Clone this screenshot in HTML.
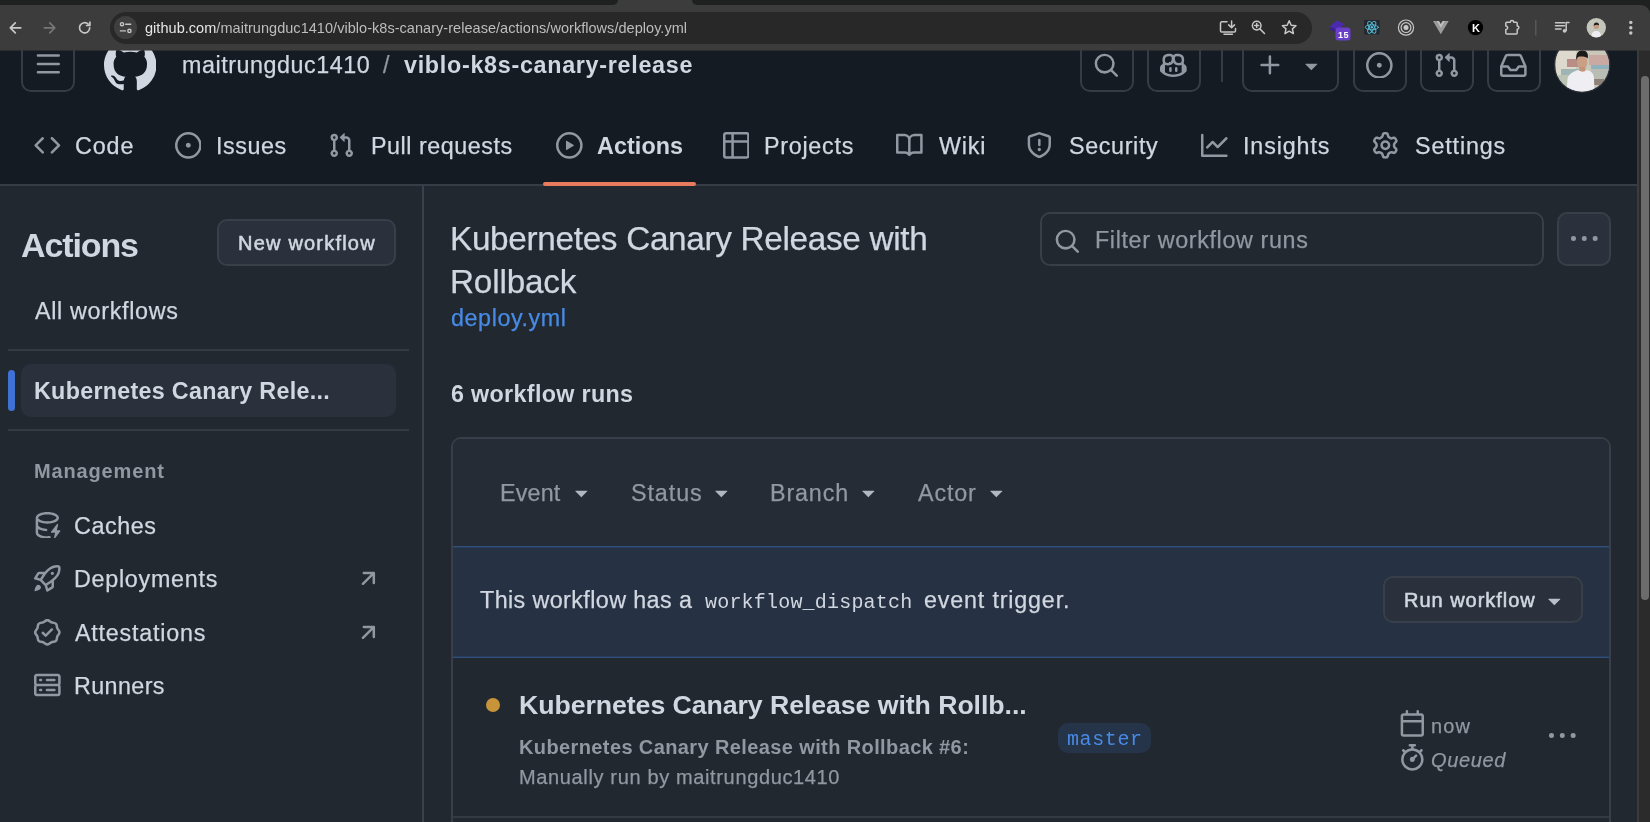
<!DOCTYPE html>
<html lang="en"><head><meta charset="utf-8"><title>Workflow runs · maitrungduc1410/viblo-k8s-canary-release</title>
<style>
html,body{margin:0;padding:0;}
body{width:1650px;height:822px;overflow:hidden;position:relative;background:#212830;font-family:'Liberation Sans', sans-serif;}
.a{position:absolute;display:block;}
.t{position:absolute;white-space:nowrap;line-height:1;will-change:transform;}
.btn{position:absolute;box-sizing:border-box;border:2px solid #383f48;border-radius:10px;}
</style></head><body>
<div class="a" style="left:0px;top:50px;width:1650px;height:135px;background:#151b23;"></div><div class="a" style="left:0px;top:184px;width:1650px;height:2px;background:#363d46;"></div><div class="btn" style="left:21px;top:38px;width:54px;height:54px;border-color:#363c45;"></div><svg class="a" style="left:34.80px;top:51.30px;" width="26.67" height="26.67" viewBox="0 0 16 16" fill="#9198a1"><path d="M1 2.75A.75.75 0 0 1 1.75 2h12.5a.75.75 0 0 1 0 1.5H1.75A.75.75 0 0 1 1 2.75Zm0 5A.75.75 0 0 1 1.75 7h12.5a.75.75 0 0 1 0 1.5H1.75A.75.75 0 0 1 1 7.75ZM1.75 12h12.5a.75.75 0 0 1 0 1.5H1.75a.75.75 0 0 1 0-1.5Z"/></svg><svg class="a" style="left:103.50px;top:38.50px;" width="52.50" height="52.50" viewBox="0 0 16 16" fill="#d1d7e0"><path d="M8 0c4.42 0 8 3.58 8 8a8.013 8.013 0 0 1-5.45 7.59c-.4.08-.55-.17-.55-.38 0-.27.01-1.13.01-2.2 0-.75-.25-1.23-.54-1.48 1.78-.2 3.65-.88 3.65-3.95 0-.88-.31-1.59-.82-2.15.08-.2.36-1.02-.08-2.12 0 0-.67-.22-2.2.82-.64-.18-1.32-.27-2-.27-.68 0-1.36.09-2 .27-1.53-1.03-2.2-.82-2.2-.82-.44 1.1-.16 1.92-.08 2.12-.51.56-.82 1.28-.82 2.15 0 3.06 1.86 3.75 3.64 3.95-.23.2-.44.55-.51 1.07-.46.21-1.61.55-2.33-.66-.15-.24-.6-.83-1.23-.82-.67.01-.27.38.01.53.34.19.73.9.82 1.13.16.45.68 1.31 2.69.94 0 .67.01 1.3.01 1.49 0 .21-.15.45-.55.38A7.995 7.995 0 0 1 0 8c0-4.42 3.58-8 8-8Z"/></svg><div class="btn" style="left:1080px;top:38px;width:54px;height:54px;border-color:#363c45;"></div><svg class="a" style="left:1093.20px;top:51.60px;" width="26.67" height="26.67" viewBox="0 0 16 16" fill="#9198a1"><path d="M10.68 11.74a6 6 0 0 1-7.922-8.982 6 6 0 0 1 8.982 7.922l3.04 3.04a.749.749 0 0 1-.326 1.275.749.749 0 0 1-.734-.215ZM11.5 7a4.499 4.499 0 1 0-8.997 0A4.499 4.499 0 0 0 11.5 7Z"/></svg><div class="btn" style="left:1147px;top:38px;width:54px;height:54px;border-color:#363c45;"></div><svg class="a" style="left:1160.30px;top:51.60px;" width="26.67" height="26.67" viewBox="0 0 16 16" fill="#9198a1"><path d="M7.998 15.035c-4.562 0-7.873-2.914-7.998-3.749V9.338c.085-.628.677-1.686 1.588-2.065.013-.07.024-.143.036-.218.029-.183.06-.384.126-.612-.201-.508-.254-1.084-.254-1.656 0-.87.128-1.769.693-2.484.579-.733 1.494-1.124 2.724-1.261 1.206-.134 2.262.034 2.944.765.05.053.096.108.139.165.044-.057.094-.112.143-.165.682-.731 1.738-.899 2.944-.765 1.23.137 2.145.528 2.724 1.261.566.715.693 1.614.693 2.484 0 .572-.053 1.148-.254 1.656.066.228.098.429.126.612.012.076.024.148.037.218.924.385 1.522 1.471 1.591 2.095v1.872c0 .766-3.351 3.795-8.002 3.795Zm0-1.485c2.28 0 4.584-1.11 5.002-1.433V7.862l-.023-.116c-.49.21-1.075.291-1.727.291-1.146 0-2.059-.327-2.71-.991A3.222 3.222 0 0 1 8 6.303a3.24 3.24 0 0 1-.544.743c-.65.664-1.563.991-2.71.991-.652 0-1.236-.081-1.727-.291l-.023.116v4.255c.419.323 2.722 1.433 5.002 1.433ZM6.762 2.83c-.193-.206-.637-.413-1.682-.297-1.019.113-1.479.404-1.713.7-.247.312-.369.789-.369 1.554 0 .793.129 1.171.308 1.371.162.181.519.379 1.442.379.853 0 1.339-.235 1.638-.54.315-.322.527-.827.617-1.553.117-.935-.037-1.395-.241-1.614Zm4.155-.297c-1.044-.116-1.488.091-1.681.297-.204.219-.359.679-.242 1.614.091.726.303 1.231.618 1.553.299.305.784.54 1.638.54.922 0 1.28-.198 1.442-.379.179-.2.308-.578.308-1.371 0-.765-.123-1.242-.37-1.554-.233-.296-.693-.587-1.713-.7ZM6.25 9.037a.75.75 0 0 1 .75.75v1.501a.75.75 0 0 1-1.5 0V9.787a.75.75 0 0 1 .75-.75Zm4.25.75v1.501a.75.75 0 0 1-1.5 0V9.787a.75.75 0 0 1 1.5 0Z"/></svg><div class="btn" style="left:1353px;top:38px;width:54px;height:54px;border-color:#363c45;"></div><svg class="a" style="left:1366.20px;top:51.60px;" width="26.67" height="26.67" viewBox="0 0 16 16" fill="#9198a1"><path d="M8 9.500a1.500 1.500 0 1 0 0-3 1.500 1.500 0 0 0 0 3ZM8 0a8 8 0 1 1 0 16A8 8 0 0 1 8 0ZM1.500 8a6.500 6.500 0 1 0 13 0 6.500 6.500 0 0 0-13 0Z"/></svg><div class="btn" style="left:1420px;top:38px;width:54px;height:54px;border-color:#363c45;"></div><svg class="a" style="left:1433.30px;top:51.60px;" width="26.67" height="26.67" viewBox="0 0 16 16" fill="#9198a1"><path d="M1.500 3.250a2.250 2.250 0 1 1 3 2.122v5.256a2.251 2.251 0 1 1-1.500 0V5.372A2.250 2.250 0 0 1 1.500 3.250Zm5.677-.177L9.573.677A.25.25 0 0 1 10 .854V2.500h1A2.500 2.500 0 0 1 13.500 5v5.628a2.251 2.251 0 1 1-1.500 0V5a1 1 0 0 0-1-1h-1v1.646a.25.25 0 0 1-.427.177L7.177 3.427a.25.25 0 0 1 0-.354ZM3.750 2.500a.75.75 0 1 0 0 1.500.75.75 0 0 0 0-1.500Zm0 9.500a.75.75 0 1 0 0 1.500.75.75 0 0 0 0-1.500Zm8.250.750a.75.75 0 1 0 1.500 0 .75.75 0 0 0-1.500 0Z"/></svg><div class="btn" style="left:1487px;top:38px;width:54px;height:54px;border-color:#363c45;"></div><svg class="a" style="left:1500.30px;top:51.60px;" width="26.67" height="26.67" viewBox="0 0 16 16" fill="#9198a1"><path d="M2.800 2.060A1.750 1.750 0 0 1 4.410 1h7.180c.7 0 1.333.417 1.610 1.060l2.740 6.395c.04.093.06.194.06.295v4.500A1.750 1.750 0 0 1 14.250 15H1.750A1.750 1.750 0 0 1 0 13.250v-4.500c0-.101.02-.202.06-.295Zm1.610.440a.25.25 0 0 0-.23.152L1.887 8H4.750a.75.75 0 0 1 .6.300L6.625 10h2.750l1.275-1.700a.75.75 0 0 1 .6-.300h2.863L11.820 2.652a.25.25 0 0 0-.23-.152Zm10.090 7h-2.875l-1.275 1.700a.75.75 0 0 1-.6.300h-3.500a.75.75 0 0 1-.6-.300L4.375 9.500H1.500v3.750c0 .138.112.25.25.25h12.500a.25.25 0 0 0 .25-.25Z"/></svg><div class="a" style="left:1221px;top:50px;width:2px;height:32px;background:#363c45;"></div><div class="btn" style="left:1242px;top:38px;width:97px;height:54px;border-color:#363c45;"></div><svg class="a" style="left:1257.00px;top:51.60px;" width="26.67" height="26.67" viewBox="0 0 16 16" fill="#9198a1"><path d="M7.75 2a.75.75 0 0 1 .75.75V7h4.25a.75.75 0 0 1 0 1.5H8.5v4.25a.75.75 0 0 1-1.5 0V8.500H2.75a.75.75 0 0 1 0-1.500H7V2.750A.75.75 0 0 1 7.750 2Z"/></svg><svg class="a" style="left:1297.60px;top:51.60px;" width="26.67" height="26.67" viewBox="0 0 16 16" fill="#9198a1"><path d="m4.427 7.427 3.396 3.396a.25.25 0 0 0 .354 0l3.396-3.396A.25.25 0 0 0 11.396 7H4.604a.25.25 0 0 0-.177.427Z"/></svg><svg class="a" style="left:1553px;top:35px" width="59" height="59" viewBox="0 0 59 59"><defs><clipPath id="av1"><circle cx="29.1" cy="29.7" r="26.9"/></clipPath></defs><circle cx="29.1" cy="29.7" r="28.3" fill="#2d343d"/><g clip-path="url(#av1)"><rect x="0" y="0" width="59" height="59" fill="#c9c6ba"/><rect x="3" y="16" width="20" height="26" fill="#ddd9cd"/><rect x="14" y="24" width="12" height="8" fill="#b98e86"/><rect x="8" y="34" width="18" height="8" fill="#9fb5b5"/><rect x="36" y="20" width="22" height="10" fill="#c9a9a2"/><rect x="38" y="30" width="20" height="4" fill="#8fb0bd"/><rect x="38" y="34" width="20" height="12" fill="#b9bdb3"/><rect x="40" y="44" width="16" height="6" fill="#8d8178"/><rect x="4" y="40" width="14" height="14" fill="#bcc4b4"/><ellipse cx="29.2" cy="27" rx="5.2" ry="7" fill="#c99f85"/><rect x="26.3" y="32" width="6" height="6" fill="#c29478"/><path d="M23.3 25 C22.6 18 25.5 15.3 29.5 15.5 C33.8 15.5 35.6 18.5 34.8 23.5 C33 21.5 28 21 25 22 Z" fill="#1b1a1a"/><path d="M13.5 59 L14.5 44 C15.5 38.5 21 36.2 25.3 35 C28 37.2 31.5 37.2 33.6 35 C38 36.2 40.6 38 41 43 L41.5 59 Z" fill="#efeff3"/></g></svg><svg class="a" style="left:34.20px;top:132.00px;" width="26.67" height="26.67" viewBox="0 0 16 16" fill="#9198a1"><path d="m11.280 3.220 4.250 4.250a.75.75 0 0 1 0 1.060l-4.250 4.250a.749.749 0 0 1-1.275-.326.749.749 0 0 1 .215-.734L13.940 8l-3.720-3.720a.749.749 0 0 1 .326-1.275.749.749 0 0 1 .734.215Zm-6.560 0a.751.751 0 0 1 1.042.018.751.751 0 0 1 .018 1.042L2.060 8l3.720 3.720a.749.749 0 0 1-.326 1.275.749.749 0 0 1-.734-.215L.470 8.530a.75.75 0 0 1 0-1.060Z"/></svg><svg class="a" style="left:174.60px;top:132.00px;" width="26.67" height="26.67" viewBox="0 0 16 16" fill="#9198a1"><path d="M8 9.500a1.500 1.500 0 1 0 0-3 1.500 1.500 0 0 0 0 3ZM8 0a8 8 0 1 1 0 16A8 8 0 0 1 8 0ZM1.500 8a6.500 6.500 0 1 0 13 0 6.500 6.500 0 0 0-13 0Z"/></svg><svg class="a" style="left:327.60px;top:132.00px;" width="26.67" height="26.67" viewBox="0 0 16 16" fill="#9198a1"><path d="M1.500 3.250a2.250 2.250 0 1 1 3 2.122v5.256a2.251 2.251 0 1 1-1.500 0V5.372A2.250 2.250 0 0 1 1.500 3.250Zm5.677-.177L9.573.677A.25.25 0 0 1 10 .854V2.500h1A2.500 2.500 0 0 1 13.500 5v5.628a2.251 2.251 0 1 1-1.500 0V5a1 1 0 0 0-1-1h-1v1.646a.25.25 0 0 1-.427.177L7.177 3.427a.25.25 0 0 1 0-.354ZM3.750 2.500a.75.75 0 1 0 0 1.500.75.75 0 0 0 0-1.500Zm0 9.500a.75.75 0 1 0 0 1.500.75.75 0 0 0 0-1.500Zm8.250.750a.75.75 0 1 0 1.500 0 .75.75 0 0 0-1.500 0Z"/></svg><svg class="a" style="left:556.30px;top:132.00px;" width="26.67" height="26.67" viewBox="0 0 16 16" fill="#9198a1"><path d="M8 0a8 8 0 1 1 0 16A8 8 0 0 1 8 0ZM1.500 8a6.500 6.500 0 1 0 13 0 6.500 6.500 0 0 0-13 0Zm4.879-2.773 4.264 2.559a.25.25 0 0 1 0 .428l-4.264 2.559A.25.25 0 0 1 6 10.559V5.442a.25.25 0 0 1 .379-.215Z"/></svg><svg class="a" style="left:722.50px;top:132.00px;" width="26.67" height="26.67" viewBox="0 0 16 16" fill="#9198a1"><path d="M0 1.750C0 .784.784 0 1.750 0h12.500C15.216 0 16 .784 16 1.750v12.500A1.750 1.750 0 0 1 14.250 16H1.750A1.750 1.750 0 0 1 0 14.250ZM6.500 6.500v8h7.750a.25.25 0 0 0 .25-.25V6.500Zm8-1.500V1.750a.25.25 0 0 0-.25-.25H6.500V5Zm-13 1.500v7.750c0 .138.112.25.25.25H5v-8ZM5 5V1.500H1.750a.25.25 0 0 0-.25.25V5Z"/></svg><svg class="a" style="left:896.30px;top:132.00px;" width="26.67" height="26.67" viewBox="0 0 16 16" fill="#9198a1"><path d="M0 1.750A.75.75 0 0 1 .750 1h4.253c1.227 0 2.317.590 3 1.501A3.743 3.743 0 0 1 11.006 1h4.245a.75.75 0 0 1 .75.750v10.500a.75.75 0 0 1-.75.750h-4.507a2.250 2.250 0 0 0-1.591.659l-.622.621a.75.75 0 0 1-1.060 0l-.622-.621A2.250 2.250 0 0 0 5.258 13H.750a.75.75 0 0 1-.750-.750Zm7.251 10.324.004-5.073-.002-2.253A2.250 2.250 0 0 0 5.003 2.500H1.500v9h3.757a3.750 3.750 0 0 1 1.994.574ZM8.755 4.750l-.004 7.322a3.752 3.752 0 0 1 1.992-.572H14.500v-9h-3.495a2.250 2.250 0 0 0-2.250 2.250Z"/></svg><svg class="a" style="left:1026.40px;top:132.00px;" width="26.67" height="26.67" viewBox="0 0 16 16" fill="#9198a1"><path d="M7.467.133a1.748 1.748 0 0 1 1.066 0l5.250 1.680A1.750 1.750 0 0 1 15 3.480V7c0 1.566-.32 3.182-1.303 4.682-.983 1.498-2.585 2.813-5.032 3.855a1.697 1.697 0 0 1-1.330 0c-2.447-1.042-4.049-2.357-5.032-3.855C1.320 10.182 1 8.566 1 7V3.480a1.750 1.750 0 0 1 1.217-1.667Zm.610 1.429a.25.25 0 0 0-.153 0l-5.250 1.680a.25.25 0 0 0-.174.238V7c0 1.358.275 2.666 1.057 3.860.784 1.194 2.121 2.340 4.366 3.297a.196.196 0 0 0 .154 0c2.245-.956 3.582-2.104 4.366-3.298C13.225 9.666 13.500 8.360 13.500 7V3.480a.251.251 0 0 0-.174-.237l-5.250-1.680ZM8.750 4.750v3a.75.75 0 0 1-1.500 0v-3a.75.75 0 0 1 1.500 0ZM9 10.500a1 1 0 1 1-2 0 1 1 0 0 1 2 0Z"/></svg><svg class="a" style="left:1201.30px;top:132.00px;" width="26.67" height="26.67" viewBox="0 0 16 16" fill="#9198a1"><path d="M1.500 1.750V13.500h13.750a.75.75 0 0 1 0 1.500H.750a.75.75 0 0 1-.750-.750V1.750a.75.75 0 0 1 1.500 0Zm14.280 2.530-5.250 5.250a.75.75 0 0 1-1.060 0L7 7.060 4.280 9.780a.751.751 0 0 1-1.042-.018.751.751 0 0 1-.018-1.042l3.250-3.250a.75.75 0 0 1 1.060 0L10 7.940l4.720-4.720a.751.751 0 0 1 1.042.018.751.751 0 0 1 .018 1.042Z"/></svg><svg class="a" style="left:1372.00px;top:132.00px;" width="26.67" height="26.67" viewBox="0 0 16 16" fill="#9198a1"><path d="M8 0a8.200 8.200 0 0 1 .701.031C9.444.095 9.990.645 10.160 1.290l.288 1.107c.018.066.079.158.212.224.231.114.454.243.668.386.123.082.233.090.299.071l1.103-.303c.644-.176 1.392.021 1.820.630.270.385.506.792.704 1.218.315.675.111 1.422-.364 1.891l-.814.806c-.049.048-.098.147-.088.294.016.257.016.515 0 .772-.010.147.038.246.088.294l.814.806c.475.469.679 1.216.364 1.891a7.977 7.977 0 0 1-.704 1.217c-.428.610-1.176.807-1.820.630l-1.102-.302c-.067-.019-.177-.011-.300.071a5.909 5.909 0 0 1-.668.386c-.133.066-.194.158-.211.224l-.290 1.106c-.168.646-.715 1.196-1.458 1.260a8.006 8.006 0 0 1-1.402 0c-.743-.064-1.289-.614-1.458-1.260l-.289-1.106c-.018-.066-.079-.158-.212-.224a5.738 5.738 0 0 1-.668-.386c-.123-.082-.233-.090-.299-.071l-1.103.303c-.644.176-1.392-.021-1.820-.630a8.120 8.120 0 0 1-.704-1.218c-.315-.675-.111-1.422.363-1.891l.815-.806c.050-.048.098-.147.088-.294a6.214 6.214 0 0 1 0-.772c.010-.147-.038-.246-.088-.294l-.815-.806C.635 6.045.431 5.298.746 4.623a7.920 7.920 0 0 1 .704-1.217c.428-.610 1.176-.807 1.820-.630l1.102.302c.067.019.177.011.300-.071.214-.143.437-.272.668-.386.133-.066.194-.158.211-.224l.290-1.106C6.009.645 6.556.095 7.299.030 7.530.010 7.764 0 8 0Zm-.571 1.525c-.036.003-.108.036-.137.146l-.289 1.105c-.147.561-.549.967-.998 1.189-.173.086-.340.183-.500.290-.417.278-.970.423-1.529.270l-1.103-.303c-.109-.030-.175.016-.195.045-.220.312-.412.644-.573.990-.014.031-.021.110.059.190l.815.806c.411.406.562.957.530 1.456a4.709 4.709 0 0 0 0 .582c.032.499-.119 1.050-.530 1.456l-.815.806c-.081.080-.073.159-.059.190.162.346.353.677.573.989.020.030.085.076.195.046l1.102-.303c.560-.153 1.113-.008 1.530.270.161.107.328.204.501.290.447.222.850.629.997 1.189l.289 1.105c.029.109.101.143.137.146a6.600 6.600 0 0 0 1.142 0c.036-.003.108-.036.137-.146l.289-1.105c.147-.561.549-.967.998-1.189.173-.086.340-.183.500-.290.417-.278.970-.423 1.529-.270l1.103.303c.109.029.175-.016.195-.045.220-.313.411-.644.573-.990.014-.031.021-.110-.059-.190l-.815-.806c-.411-.406-.562-.957-.530-1.456a4.709 4.709 0 0 0 0-.582c-.032-.499.119-1.050.530-1.456l.815-.806c.081-.080.073-.159.059-.190a6.464 6.464 0 0 0-.573-.989c-.020-.030-.085-.076-.195-.046l-1.102.303c-.560.153-1.113.008-1.530-.270a4.440 4.440 0 0 0-.501-.290c-.447-.222-.850-.629-.997-1.189l-.289-1.105c-.029-.110-.101-.143-.137-.146a6.600 6.600 0 0 0-1.142 0ZM11 8a3 3 0 1 1-6 0 3 3 0 0 1 6 0ZM9.500 8a1.500 1.500 0 1 0-3.001.001A1.500 1.500 0 0 0 9.500 8Z"/></svg><div class="a" style="left:543px;top:182px;width:153px;height:4px;background:#e87a5e;border-radius:2px;"></div><div class="a" style="left:422px;top:186px;width:2px;height:640px;background:#3a414a;"></div><div class="btn" style="left:217px;top:219px;width:179px;height:47px;background:#2a313c;"></div><div class="a" style="left:8px;top:349px;width:401px;height:2px;background:#333a43;"></div><div class="a" style="left:21px;top:364px;width:375px;height:53px;background:#2a313c;border-radius:10px;"></div><div class="a" style="left:8px;top:370px;width:7px;height:40.5px;background:#3f72d4;border-radius:3.5px;"></div><div class="a" style="left:8px;top:429px;width:401px;height:2px;background:#333a43;"></div><svg class="a" style="left:34.40px;top:511.70px;" width="26.67" height="26.67" viewBox="0 0 16 16" fill="#9198a1"><path d="M2.500 5.724V8c0 .248.238.700 1.169 1.159.874.430 2.144.745 3.620.822a.75.75 0 1 1-.078 1.498c-1.622-.085-3.102-.432-4.204-.975a5.565 5.565 0 0 1-.507-.280V12.500c0 .133.058.318.282.551.227.237.591.483 1.101.707 1.015.447 2.470.742 4.117.742.406 0 .802-.018 1.183-.052a.751.751 0 1 1 .134 1.494C8.890 15.980 8.450 16 8 16c-1.805 0-3.475-.320-4.721-.869-.623-.274-1.173-.619-1.579-1.041-.408-.425-.700-.964-.700-1.590v-9c0-.626.292-1.165.700-1.591.406-.420.956-.766 1.579-1.040C4.525.320 6.195 0 8 0c1.806 0 3.476.320 4.721.869.623.274 1.173.619 1.579 1.041.408.425.700.964.700 1.590 0 .626-.292 1.165-.700 1.591-.406.420-.956.766-1.578 1.040C11.475 6.680 9.805 7 8 7c-1.805 0-3.475-.320-4.721-.869a6.150 6.150 0 0 1-.779-.407Zm0-2.224c0 .133.058.318.282.551.227.237.591.483 1.101.707C4.898 5.205 6.353 5.500 8 5.500c1.646 0 3.101-.295 4.118-.742.508-.224.873-.471 1.100-.708.224-.232.282-.417.282-.550 0-.133-.058-.318-.282-.551-.227-.237-.591-.483-1.101-.707C11.102 1.795 9.647 1.500 8 1.500c-1.646 0-3.101.295-4.118.742-.508.224-.873.471-1.100.708-.224.232-.282.417-.282.550ZM14.490 7.582a.375.375 0 0 0-.660-.313l-3.625 4.625a.375.375 0 0 0 .295.606h2.127l-.619 2.922a.375.375 0 0 0 .666.304l3.125-4.125A.375.375 0 0 0 15.500 11h-1.778l.769-3.418Z"/></svg><svg class="a" style="left:34.00px;top:565.20px;" width="26.67" height="26.67" viewBox="0 0 16 16" fill="#9198a1"><path d="M14.064 0h.186C15.216 0 16 .784 16 1.750v.186a8.752 8.752 0 0 1-2.564 6.186l-.458.459c-.314.314-.641.616-.979.904v3.207c0 .608-.315 1.172-.833 1.490l-2.774 1.707a.749.749 0 0 1-1.110-.418l-.954-3.102a1.214 1.214 0 0 1-.145-.125L3.754 9.816a1.218 1.218 0 0 1-.124-.145L.528 8.717a.749.749 0 0 1-.418-1.110l1.710-2.774A1.748 1.748 0 0 1 3.310 4h3.204c.288-.338.590-.665.904-.979l.459-.458A8.749 8.749 0 0 1 14.064 0ZM8.938 3.623h-.002l-.458.458c-.760.760-1.437 1.598-2.020 2.500l-1.500 2.317 2.143 2.143 2.317-1.500c.902-.583 1.740-1.260 2.499-2.020l.459-.458a7.250 7.250 0 0 0 2.123-5.127V1.750a.25.25 0 0 0-.25-.25h-.186a7.249 7.249 0 0 0-5.125 2.123ZM3.560 14.560c-.732.732-2.334 1.045-3.005 1.148a.234.234 0 0 1-.201-.064.234.234 0 0 1-.064-.201c.103-.671.416-2.273 1.150-3.003a1.502 1.502 0 1 1 2.120 2.120Zm6.940-3.935c-.088.060-.177.118-.266.175l-2.350 1.521.548 1.783 1.949-1.200a.25.25 0 0 0 .119-.213ZM3.678 8.116 5.200 5.766c.058-.090.117-.178.176-.266H3.309a.25.25 0 0 0-.213.119l-1.200 1.950ZM12 5a1 1 0 1 1-2 0 1 1 0 0 1 2 0Z"/></svg><svg class="a" style="left:34.20px;top:618.90px;" width="26.67" height="26.67" viewBox="0 0 16 16" fill="#9198a1"><path d="m9.585.520.929.680c.153.112.331.186.518.215l1.138.175a2.678 2.678 0 0 1 2.240 2.240l.174 1.139c.029.187.103.365.215.518l.680.928a2.677 2.677 0 0 1 0 3.170l-.680.928a1.174 1.174 0 0 0-.215.518l-.175 1.138a2.678 2.678 0 0 1-2.241 2.241l-1.138.175a1.170 1.170 0 0 0-.518.215l-.928.680a2.677 2.677 0 0 1-3.170 0l-.928-.680a1.174 1.174 0 0 0-.518-.215L3.830 14.410a2.678 2.678 0 0 1-2.240-2.240l-.175-1.138a1.170 1.170 0 0 0-.215-.518l-.680-.928a2.677 2.677 0 0 1 0-3.170l.680-.928c.112-.153.186-.331.215-.518l.175-1.140a2.678 2.678 0 0 1 2.240-2.240l1.139-.175c.187-.029.365-.103.518-.215l.928-.680a2.677 2.677 0 0 1 3.170 0ZM7.303 1.728l-.927.680a2.670 2.670 0 0 1-1.180.489l-1.137.174a1.179 1.179 0 0 0-.987.987l-.174 1.136a2.677 2.677 0 0 1-.489 1.180l-.680.928a1.180 1.180 0 0 0 0 1.394l.680.927c.256.348.424.753.489 1.180l.174 1.137c.078.509.478.909.987.987l1.136.174a2.670 2.670 0 0 1 1.180.489l.928.680c.414.305.979.305 1.394 0l.927-.680a2.670 2.670 0 0 1 1.180-.489l1.137-.174a1.180 1.180 0 0 0 .987-.987l.174-1.136a2.670 2.670 0 0 1 .489-1.180l.680-.928a1.176 1.176 0 0 0 0-1.394l-.680-.927a2.686 2.686 0 0 1-.489-1.180l-.174-1.137a1.179 1.179 0 0 0-.987-.987l-1.136-.174a2.677 2.677 0 0 1-1.180-.489l-.928-.680a1.176 1.176 0 0 0-1.394 0ZM11.280 6.780l-3.750 3.750a.75.75 0 0 1-1.060 0L4.720 8.780a.751.751 0 0 1 .018-1.042.751.751 0 0 1 1.042-.018L7 8.940l3.220-3.220a.751.751 0 0 1 1.042.018.751.751 0 0 1 .018 1.042Z"/></svg><svg class="a" style="left:34.20px;top:672.30px;" width="26.67" height="26.67" viewBox="0 0 16 16" fill="#9198a1"><path d="M1.750 1h12.500c.966 0 1.750.784 1.750 1.750v4c0 .372-.116.717-.314 1 .198.283.314.628.314 1v4a1.750 1.750 0 0 1-1.750 1.750H1.750A1.750 1.750 0 0 1 0 12.750v-4c0-.358.109-.707.314-1a1.739 1.739 0 0 1-.314-1v-4C0 1.784.784 1 1.750 1ZM1.500 2.750v4c0 .138.112.25.25.25h12.500a.25.25 0 0 0 .25-.25v-4a.25.25 0 0 0-.25-.25H1.750a.25.25 0 0 0-.25.25Zm.25 5.750a.25.25 0 0 0-.25.25v4c0 .138.112.25.25.25h12.500a.25.25 0 0 0 .25-.25v-4a.25.25 0 0 0-.25-.25ZM7 4.750A.75.75 0 0 1 7.750 4h4.500a.75.75 0 0 1 0 1.500h-4.500A.75.75 0 0 1 7 4.750ZM7.750 10h4.500a.75.75 0 0 1 0 1.500h-4.500a.75.75 0 0 1 0-1.500ZM3 4.750A.75.75 0 0 1 3.750 4h.5a.75.75 0 0 1 0 1.500h-.5A.75.75 0 0 1 3 4.750ZM3.750 10h.5a.75.75 0 0 1 0 1.500h-.5a.75.75 0 0 1 0-1.500Z"/></svg><svg class="a" style="left:355.00px;top:564.90px;" width="26.67" height="26.67" viewBox="0 0 16 16" fill="#9198a1"><path d="M4.530 4.750A.75.75 0 0 1 5.280 4h6.010a.75.75 0 0 1 .75.750v6.010a.75.75 0 0 1-1.500 0v-4.200l-5.260 5.261a.749.749 0 0 1-1.275-.326.749.749 0 0 1 .215-.734L9.480 5.500h-4.200a.75.75 0 0 1-.750-.750Z"/></svg><svg class="a" style="left:355.00px;top:618.60px;" width="26.67" height="26.67" viewBox="0 0 16 16" fill="#9198a1"><path d="M4.530 4.750A.75.75 0 0 1 5.280 4h6.010a.75.75 0 0 1 .75.750v6.010a.75.75 0 0 1-1.500 0v-4.200l-5.260 5.261a.749.749 0 0 1-1.275-.326.749.749 0 0 1 .215-.734L9.480 5.500h-4.200a.75.75 0 0 1-.750-.750Z"/></svg><div class="btn" style="left:1040px;top:212px;width:504px;height:54px;"></div><svg class="a" style="left:1053.50px;top:227.60px;" width="26.67" height="26.67" viewBox="0 0 16 16" fill="#9198a1"><path d="M10.68 11.74a6 6 0 0 1-7.922-8.982 6 6 0 0 1 8.982 7.922l3.04 3.04a.749.749 0 0 1-.326 1.275.749.749 0 0 1-.734-.215ZM11.5 7a4.499 4.499 0 1 0-8.997 0A4.499 4.499 0 0 0 11.5 7Z"/></svg><div class="btn" style="left:1557px;top:212px;width:54px;height:54px;background:#2a313c;"></div><svg class="a" style="left:1570.90px;top:226.20px;" width="26.67" height="26.67" viewBox="0 0 16 16" fill="#9198a1"><path d="M8 9a1.500 1.500 0 1 0 0-3 1.500 1.500 0 0 0 0 3ZM1.500 9a1.500 1.500 0 1 0 0-3 1.500 1.500 0 0 0 0 3Zm13 0a1.500 1.500 0 1 0 0-3 1.500 1.500 0 0 0 0 3Z"/></svg><div class="a" style="left:451px;top:437px;width:1160px;height:420px;box-sizing:border-box;border:2px solid #383f48;border-radius:10px;overflow:hidden;"><div class="a" style="left:0;top:0;width:1160px;height:107px;background:#262c36;"></div><div class="a" style="left:0;top:107px;width:1160px;height:112px;background:#263143;"></div><div class="a" style="left:0;top:107px;width:1160px;height:1px;background:#30507f;"></div><div class="a" style="left:0;top:108px;width:1160px;height:1px;background:#293d5b;"></div><div class="a" style="left:0;top:217px;width:1160px;height:1px;background:#293d5b;"></div><div class="a" style="left:0;top:218px;width:1160px;height:1px;background:#30507f;"></div><div class="a" style="left:0;top:377px;width:1160px;height:2px;background:#333a43;"></div></div><svg class="a" style="left:568.00px;top:479.30px;" width="26.67" height="26.67" viewBox="0 0 16 16" fill="#b1b7c1"><path d="m4.427 7.427 3.396 3.396a.25.25 0 0 0 .354 0l3.396-3.396A.25.25 0 0 0 11.396 7H4.604a.25.25 0 0 0-.177.427Z"/></svg><svg class="a" style="left:707.70px;top:479.30px;" width="26.67" height="26.67" viewBox="0 0 16 16" fill="#b1b7c1"><path d="m4.427 7.427 3.396 3.396a.25.25 0 0 0 .354 0l3.396-3.396A.25.25 0 0 0 11.396 7H4.604a.25.25 0 0 0-.177.427Z"/></svg><svg class="a" style="left:854.70px;top:479.30px;" width="26.67" height="26.67" viewBox="0 0 16 16" fill="#b1b7c1"><path d="m4.427 7.427 3.396 3.396a.25.25 0 0 0 .354 0l3.396-3.396A.25.25 0 0 0 11.396 7H4.604a.25.25 0 0 0-.177.427Z"/></svg><svg class="a" style="left:983.00px;top:479.30px;" width="26.67" height="26.67" viewBox="0 0 16 16" fill="#b1b7c1"><path d="m4.427 7.427 3.396 3.396a.25.25 0 0 0 .354 0l3.396-3.396A.25.25 0 0 0 11.396 7H4.604a.25.25 0 0 0-.177.427Z"/></svg><div class="btn" style="left:1383px;top:576px;width:200px;height:47px;background:#2a313c;"></div><svg class="a" style="left:1541.00px;top:586.60px;" width="26.67" height="26.67" viewBox="0 0 16 16" fill="#b9bfc9"><path d="m4.427 7.427 3.396 3.396a.25.25 0 0 0 .354 0l3.396-3.396A.25.25 0 0 0 11.396 7H4.604a.25.25 0 0 0-.177.427Z"/></svg><div class="a" style="left:485.7px;top:697.5px;width:14.3px;height:14.3px;background:#c8943a;border-radius:50%;"></div><div class="a" style="left:1058px;top:723px;width:93px;height:30px;background:#263449;border-radius:10px;"></div><svg class="a" style="left:1398.80px;top:710.20px;" width="26.67" height="26.67" viewBox="0 0 16 16" fill="#9198a1"><path d="M4.750 0a.75.75 0 0 1 .75.750V2h5V.750a.75.75 0 0 1 1.500 0V2h1.250c.966 0 1.750.784 1.750 1.750v10.500A1.750 1.750 0 0 1 13.250 16H2.750A1.750 1.750 0 0 1 1 14.250V3.750C1 2.784 1.784 2 2.750 2H4V.750A.75.75 0 0 1 4.750 0ZM2.500 7.500v6.750c0 .138.112.25.25.25h10.500a.25.25 0 0 0 .25-.25V7.500Zm10.750-4H2.750a.25.25 0 0 0-.25.25V6h11V3.750a.25.25 0 0 0-.25-.25Z"/></svg><svg class="a" style="left:1399.00px;top:744.30px;" width="26.67" height="26.67" viewBox="0 0 16 16" fill="#9198a1"><path d="M5.750.750A.75.75 0 0 1 6.500 0h3a.75.75 0 0 1 0 1.500h-.750v1l-.001.041a6.724 6.724 0 0 1 3.464 1.435l.007-.006.750-.750a.749.749 0 0 1 1.275.326.749.749 0 0 1-.215.734l-.750.750-.006.007a6.750 6.750 0 1 1-10.548 0L2.720 5.030l-.750-.750a.751.751 0 0 1 .018-1.042.751.751 0 0 1 1.042-.018l.750.750.007.006A6.720 6.720 0 0 1 7.250 2.541V1.500H6.500a.75.75 0 0 1-.750-.750ZM8 14.500a5.250 5.250 0 1 0-.001-10.501A5.250 5.250 0 0 0 8 14.500Zm.389-6.700 1.330-1.330a.75.75 0 1 1 1.061 1.060L9.450 8.861A1.503 1.503 0 0 1 8 10.750a1.499 1.499 0 1 1 .389-2.950Z"/></svg><svg class="a" style="left:1549.30px;top:722.70px;" width="26.67" height="26.67" viewBox="0 0 16 16" fill="#9198a1"><path d="M8 9a1.500 1.500 0 1 0 0-3 1.500 1.500 0 0 0 0 3ZM1.500 9a1.500 1.500 0 1 0 0-3 1.500 1.500 0 0 0 0 3Zm13 0a1.500 1.500 0 1 0 0-3 1.500 1.500 0 0 0 0 3Z"/></svg><div class="a" style="left:1637px;top:50px;width:13px;height:772px;background:#2b2b2b;border-left:2px solid #3b3b3b;box-sizing:border-box;"></div><div class="a" style="left:1641px;top:75.5px;width:8px;height:524px;background:#6c6c6c;border-radius:4px;"></div><div class="a" style="left:0px;top:0px;width:1650px;height:14px;background:#1f2020;"></div><div class="a" style="left:0px;top:5px;width:1650px;height:45px;background:#3c3c3c;border-top-right-radius:9px;"></div><div class="a" style="left:612px;top:0px;width:86px;height:6px;background:#3c3c3c;"></div><div class="a" style="left:0px;top:50px;width:1650px;height:1px;background:#3c3c3c;opacity:0.55;"></div><div class="a" style="left:0px;top:0px;width:618px;height:5px;background:#1f2020;border-bottom-right-radius:5px;"></div><div class="a" style="left:692px;top:0px;width:958px;height:5px;background:#1f2020;border-bottom-left-radius:5px;"></div><div class="a" style="left:110px;top:11.5px;width:1202px;height:32.5px;background:#282828;border-radius:16.25px;"></div><div class="a" style="left:114px;top:16.2px;width:23.3px;height:23.3px;background:#3f3f3f;border-radius:50%;"></div>
<svg class="a" style="left:0;top:5px" width="1650" height="45" viewBox="0 5 1650 45" fill="none" stroke-linecap="round" stroke-linejoin="round">
<g stroke="#c7c7c7" stroke-width="1.7">
<path d="M20.8 27.8H10.7M15.3 22.8L10.3 27.8l5 5"/>
<path d="M89.7 27.8a5.1 5.1 0 1 1-1.5-3.6" /><path d="M89.900 22.200v3.300h-3.300" />
</g>
<g stroke="#c7c7c7" stroke-width="1.4">
<path d="M125.700 24.200h5M120.400 30.900h5"/>
<circle cx="122" cy="24.200" r="1.600"/><circle cx="129.400" cy="30.900" r="1.600"/>
</g>
<g stroke="#777" stroke-width="1.7"><path d="M44.300 27.800h10.100M49.800 22.800l5 5-5 5"/></g>
<g stroke="#c7c7c7" stroke-width="1.5">
<path d="M1227 21.800h-5.200a1.300 1.300 0 0 0-1.300 1.300v7.600a1.300 1.300 0 0 0 1.300 1.300h12.400a1.300 1.300 0 0 0 1.300-1.300v-2.200M1224 34.300h8.400M1231.600 21v6.400M1228.700 24.900l2.900 2.900 2.900-2.900"/>
<circle cx="1256.700" cy="25.600" r="4.300"/><path d="M1259.900 28.900l4.600 4.600M1254.700 25.600h4M1256.700 23.600v4"/>
<path d="M1289.200 20.800l2 4.400 4.800.5-3.600 3.200 1 4.700-4.200-2.400-4.200 2.400 1-4.700-3.600-3.200 4.800-.5z"/>
<path d="M1506.300 21.700h2.500a1.700 1.700 0 0 1 3.400 0h2.500a1 1 0 0 1 1 1v2.700a1.700 1.700 0 0 1 0 3.400v3.700a1 1 0 0 1-1 1h-9.400a1 1 0 0 1-1-1v-3.500a1.700 1.700 0 0 0 0-3.600v-2.700a1 1 0 0 1 1-1z" transform="translate(1.500,.5)"/>
<path d="M1555.500 22.700h9M1555.500 25.800h9M1555.500 28.900h5.500M1566.200 30.500v-8h2.800"/>
</g>
<circle cx="1564.600" cy="30.800" r="1.900" fill="#c7c7c7"/>
<path d="M1535.800 20.500v14.500" stroke="#5c5c5c" stroke-width="1.3"/>
<g fill="#c7c7c7"><circle cx="1630.800" cy="22.400" r="1.700"/><circle cx="1630.800" cy="27.700" r="1.700"/><circle cx="1630.800" cy="33" r="1.700"/></g>
<path d="M1329.500 27l7-6.500 8 3.500-7 6.500z" fill="#4a2bb0"/><path d="M1329.500 29.500l2.500-2 5.500 2.800v2.500z" fill="#3a2090"/>
<rect x="1335.500" y="27.600" width="15" height="12.800" rx="3" fill="#6a40c9"/>
<rect x="1364" y="20" width="15.600" height="14.600" rx="1" fill="#23272f"/>
<g stroke="#58c4dc" stroke-width="0.9"><ellipse cx="1371.800" cy="27.300" rx="6.600" ry="2.500"/><ellipse cx="1371.800" cy="27.300" rx="6.600" ry="2.500" transform="rotate(60 1371.800 27.300)"/><ellipse cx="1371.800" cy="27.300" rx="6.600" ry="2.500" transform="rotate(120 1371.800 27.300)"/></g>
<circle cx="1371.800" cy="27.300" r="1.200" fill="#58c4dc"/>
<g stroke="#c7c7c7" stroke-width="1.200"><circle cx="1406" cy="27.600" r="7.600"/><circle cx="1406" cy="27.600" r="4.900"/></g><circle cx="1406" cy="27.600" r="2.500" fill="#c7c7c7"/>
<path d="M1433 21h3.300l4.500 7.800 4.500-7.800h3.400l-7.900 13.300z" fill="#9c9c9c"/><path d="M1436.300 21h2.800l1.700 3 1.700-3h2.800l-4.500 7.800z" fill="#bdbdbd"/>
<circle cx="1475.500" cy="27.600" r="7.700" fill="#000"/>
<circle cx="1596.300" cy="27.600" r="9.700" fill="#c4c6bb"/>
<path d="M1591.500 36.100c0-4 2-5 4.800-5.200 2.800.2 4.600 1.400 4.600 5.200a9.700 9.700 0 0 1-9.400 0z" fill="#eeeef2"/><circle cx="1596.300" cy="26.500" r="2.600" fill="#c59b82"/><path d="M1593.700 25.800c0-2.600 1.200-3.400 2.700-3.400s2.700.8 2.600 3c-1-.8-3.500-1-5.300.4z" fill="#1c1b1b"/>
</svg>
<span class="t" id="url" style="left:145.07px;top:21.33px;font-size:14.5px;font-weight:400;color:#e6e6e6;font-family:'Liberation Sans', sans-serif;letter-spacing:0.040px;">github.com<span style="color:#bdbdbd">/maitrungduc1410/viblo-k8s-canary-release/actions/workflows/deploy.yml</span></span>
<span class="t" id="owner" style="left:181.80px;top:54.28px;font-size:23.3px;font-weight:400;color:#d1d7e0;font-family:'Liberation Sans', sans-serif;letter-spacing:0.543px;-webkit-text-stroke:0.25px #d1d7e0;">maitrungduc1410</span>
<span class="t" id="slash" style="left:383.42px;top:54.28px;font-size:23.3px;font-weight:400;color:#9198a1;font-family:'Liberation Sans', sans-serif;letter-spacing:0.000px;-webkit-text-stroke:0.25px #9198a1;">/</span>
<span class="t" id="repo" style="left:404.10px;top:54.28px;font-size:23.3px;font-weight:700;color:#d1d7e0;font-family:'Liberation Sans', sans-serif;letter-spacing:0.713px;">viblo-k8s-canary-release</span>
<span class="t" id="n_code" style="left:75.16px;top:134.68px;font-size:23.3px;font-weight:400;color:#d1d7e0;font-family:'Liberation Sans', sans-serif;letter-spacing:0.918px;-webkit-text-stroke:0.25px #d1d7e0;">Code</span>
<span class="t" id="n_issues" style="left:215.88px;top:134.68px;font-size:23.3px;font-weight:400;color:#d1d7e0;font-family:'Liberation Sans', sans-serif;letter-spacing:0.564px;-webkit-text-stroke:0.25px #d1d7e0;">Issues</span>
<span class="t" id="n_pr" style="left:370.78px;top:134.68px;font-size:23.3px;font-weight:400;color:#d1d7e0;font-family:'Liberation Sans', sans-serif;letter-spacing:0.545px;-webkit-text-stroke:0.25px #d1d7e0;">Pull requests</span>
<span class="t" id="n_actions" style="left:596.57px;top:134.68px;font-size:23.3px;font-weight:700;color:#d1d7e0;font-family:'Liberation Sans', sans-serif;letter-spacing:0.099px;">Actions</span>
<span class="t" id="n_projects" style="left:763.78px;top:134.68px;font-size:23.3px;font-weight:400;color:#d1d7e0;font-family:'Liberation Sans', sans-serif;letter-spacing:0.736px;-webkit-text-stroke:0.25px #d1d7e0;">Projects</span>
<span class="t" id="n_wiki" style="left:939.17px;top:134.68px;font-size:23.3px;font-weight:400;color:#d1d7e0;font-family:'Liberation Sans', sans-serif;letter-spacing:0.785px;-webkit-text-stroke:0.25px #d1d7e0;">Wiki</span>
<span class="t" id="n_security" style="left:1068.74px;top:134.68px;font-size:23.3px;font-weight:400;color:#d1d7e0;font-family:'Liberation Sans', sans-serif;letter-spacing:0.643px;-webkit-text-stroke:0.25px #d1d7e0;">Security</span>
<span class="t" id="n_insights" style="left:1242.75px;top:134.68px;font-size:23.3px;font-weight:400;color:#d1d7e0;font-family:'Liberation Sans', sans-serif;letter-spacing:0.875px;-webkit-text-stroke:0.25px #d1d7e0;">Insights</span>
<span class="t" id="n_settings" style="left:1414.94px;top:134.68px;font-size:23.3px;font-weight:400;color:#d1d7e0;font-family:'Liberation Sans', sans-serif;letter-spacing:0.866px;-webkit-text-stroke:0.25px #d1d7e0;">Settings</span>
<span class="t" id="s_actions" style="left:20.96px;top:228.22px;font-size:34.0px;font-weight:700;color:#d1d7e0;font-family:'Liberation Sans', sans-serif;letter-spacing:-1.117px;">Actions</span>
<span class="t" id="s_new" style="left:237.87px;top:232.57px;font-size:20.0px;font-weight:400;color:#d1d7e0;font-family:'Liberation Sans', sans-serif;letter-spacing:1.205px;-webkit-text-stroke:0.55px #d1d7e0;">New workflow</span>
<span class="t" id="s_all" style="left:34.88px;top:299.98px;font-size:23.3px;font-weight:400;color:#d1d7e0;font-family:'Liberation Sans', sans-serif;letter-spacing:0.686px;-webkit-text-stroke:0.25px #d1d7e0;">All workflows</span>
<span class="t" id="s_kube" style="left:34.23px;top:379.58px;font-size:23.3px;font-weight:700;color:#d1d7e0;font-family:'Liberation Sans', sans-serif;letter-spacing:0.289px;">Kubernetes Canary Rele...</span>
<span class="t" id="s_mgmt" style="left:34.10px;top:461.27px;font-size:20.0px;font-weight:700;color:#9198a1;font-family:'Liberation Sans', sans-serif;letter-spacing:0.848px;">Management</span>
<span class="t" id="s_caches" style="left:74.16px;top:514.98px;font-size:23.3px;font-weight:400;color:#d1d7e0;font-family:'Liberation Sans', sans-serif;letter-spacing:0.572px;-webkit-text-stroke:0.25px #d1d7e0;">Caches</span>
<span class="t" id="s_deploy" style="left:73.78px;top:568.28px;font-size:23.3px;font-weight:400;color:#d1d7e0;font-family:'Liberation Sans', sans-serif;letter-spacing:0.735px;-webkit-text-stroke:0.25px #d1d7e0;">Deployments</span>
<span class="t" id="s_attest" style="left:75.09px;top:621.98px;font-size:23.3px;font-weight:400;color:#d1d7e0;font-family:'Liberation Sans', sans-serif;letter-spacing:0.788px;-webkit-text-stroke:0.25px #d1d7e0;">Attestations</span>
<span class="t" id="s_runners" style="left:73.78px;top:674.78px;font-size:23.3px;font-weight:400;color:#d1d7e0;font-family:'Liberation Sans', sans-serif;letter-spacing:0.399px;-webkit-text-stroke:0.25px #d1d7e0;">Runners</span>
<span class="t" id="title1" style="left:449.86px;top:222.31px;font-size:33.3px;font-weight:400;color:#d1d7e0;font-family:'Liberation Sans', sans-serif;letter-spacing:-0.310px;-webkit-text-stroke:0.25px #d1d7e0;">Kubernetes Canary Release with</span>
<span class="t" id="title2" style="left:449.86px;top:264.81px;font-size:33.3px;font-weight:400;color:#d1d7e0;font-family:'Liberation Sans', sans-serif;letter-spacing:-0.175px;-webkit-text-stroke:0.25px #d1d7e0;">Rollback</span>
<span class="t" id="deploy" style="left:450.75px;top:307.48px;font-size:23.3px;font-weight:400;color:#478be6;font-family:'Liberation Sans', sans-serif;letter-spacing:0.596px;-webkit-text-stroke:0.25px #478be6;">deploy.yml</span>
<span class="t" id="filter" style="left:1095.36px;top:229.28px;font-size:23.3px;font-weight:400;color:#9198a1;font-family:'Liberation Sans', sans-serif;letter-spacing:0.639px;-webkit-text-stroke:0.25px #9198a1;">Filter workflow runs</span>
<span class="t" id="runs" style="left:450.83px;top:382.78px;font-size:23.3px;font-weight:700;color:#d1d7e0;font-family:'Liberation Sans', sans-serif;letter-spacing:0.331px;">6 workflow runs</span>
<span class="t" id="f_event" style="left:500.36px;top:481.98px;font-size:23.3px;font-weight:400;color:#9198a1;font-family:'Liberation Sans', sans-serif;letter-spacing:0.183px;-webkit-text-stroke:0.25px #9198a1;">Event</span>
<span class="t" id="f_status" style="left:630.74px;top:481.98px;font-size:23.3px;font-weight:400;color:#9198a1;font-family:'Liberation Sans', sans-serif;letter-spacing:0.927px;-webkit-text-stroke:0.25px #9198a1;">Status</span>
<span class="t" id="f_branch" style="left:769.81px;top:481.98px;font-size:23.3px;font-weight:400;color:#9198a1;font-family:'Liberation Sans', sans-serif;letter-spacing:0.864px;-webkit-text-stroke:0.25px #9198a1;">Branch</span>
<span class="t" id="f_actor" style="left:918.17px;top:481.98px;font-size:23.3px;font-weight:400;color:#9198a1;font-family:'Liberation Sans', sans-serif;letter-spacing:0.854px;-webkit-text-stroke:0.25px #9198a1;">Actor</span>
<span class="t" id="b_text1" style="left:479.98px;top:588.78px;font-size:23.3px;font-weight:400;color:#d1d7e0;font-family:'Liberation Sans', sans-serif;letter-spacing:0.406px;-webkit-text-stroke:0.25px #d1d7e0;">This workflow has a</span>
<span class="t" id="b_code" style="left:704.97px;top:593.07px;font-size:20.0px;font-weight:400;color:#d1d7e0;font-family:'Liberation Mono', monospace;letter-spacing:0.199px;">workflow_dispatch</span>
<span class="t" id="b_text2" style="left:924.31px;top:588.78px;font-size:23.3px;font-weight:400;color:#d1d7e0;font-family:'Liberation Sans', sans-serif;letter-spacing:0.824px;-webkit-text-stroke:0.25px #d1d7e0;">event trigger.</span>
<span class="t" id="b_run" style="left:1404.25px;top:590.07px;font-size:20.0px;font-weight:400;color:#d1d7e0;font-family:'Liberation Sans', sans-serif;letter-spacing:0.972px;-webkit-text-stroke:0.55px #d1d7e0;">Run workflow</span>
<span class="t" id="r_title" style="left:518.95px;top:691.60px;font-size:26.7px;font-weight:700;color:#d1d7e0;font-family:'Liberation Sans', sans-serif;letter-spacing:-0.066px;">Kubernetes Canary Release with Rollb...</span>
<span class="t" id="r_sub1" style="left:519.10px;top:736.77px;font-size:20.0px;font-weight:700;color:#9198a1;font-family:'Liberation Sans', sans-serif;letter-spacing:0.388px;">Kubernetes Canary Release with Rollback #6:</span>
<span class="t" id="r_sub2" style="left:518.53px;top:766.57px;font-size:20.0px;font-weight:400;color:#9198a1;font-family:'Liberation Sans', sans-serif;letter-spacing:0.640px;-webkit-text-stroke:0.25px #9198a1;">Manually run by maitrungduc1410</span>
<span class="t" id="r_master" style="left:1066.95px;top:730.07px;font-size:20.0px;font-weight:400;color:#478be6;font-family:'Liberation Mono', monospace;letter-spacing:0.619px;">master</span>
<span class="t" id="r_now" style="left:1430.57px;top:716.07px;font-size:20.0px;font-weight:400;color:#9198a1;font-family:'Liberation Sans', sans-serif;letter-spacing:1.106px;-webkit-text-stroke:0.25px #9198a1;">now</span>
<span class="t" id="r_queued" style="left:1431.40px;top:749.77px;font-size:20.0px;font-weight:400;color:#9198a1;font-family:'Liberation Sans', sans-serif;letter-spacing:0.628px;font-style:italic;-webkit-text-stroke:0.25px #9198a1;">Queued</span>
<span class="t" id="badge15" style="left:1338.23px;top:30.88px;font-size:9.0px;font-weight:700;color:#ffffff;font-family:'Liberation Sans', sans-serif;letter-spacing:0.547px;">15</span>
<span class="t" id="extK" style="left:1471.77px;top:23.19px;font-size:11.0px;font-weight:700;color:#ffffff;font-family:'Liberation Sans', sans-serif;letter-spacing:0.000px;">K</span>
</body></html>
